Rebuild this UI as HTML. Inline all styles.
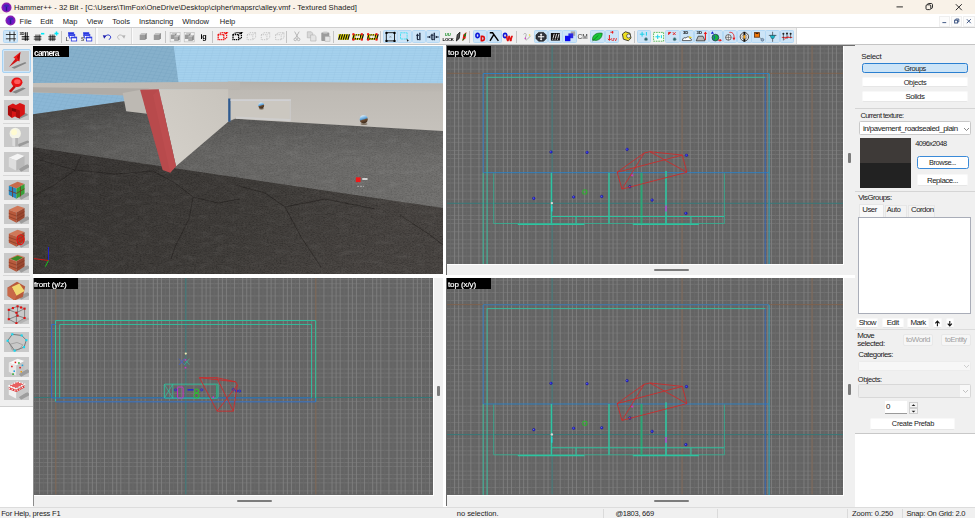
<!DOCTYPE html>
<html><head><meta charset="utf-8"><title>Hammer++</title>
<style>
*{box-sizing:border-box;margin:0;padding:0}
html,body{width:975px;height:518px;overflow:hidden;background:#fff}
body{position:relative;font-family:"Liberation Sans",sans-serif;font-size:7.5px;color:#1a1a1a;line-height:1}
.abs,.abs>*{position:absolute}
div,span,svg{position:absolute}
.t{white-space:nowrap;line-height:9px;height:9px}
#title{left:0;top:0;width:975px;height:14.400px;background:#f9f2e8}
#menu{left:0;top:14.400px;width:975px;height:12.600px;background:#fff}
#tbar{left:0;top:27px;width:975px;height:18.300px;background:linear-gradient(to right,#f0f0f0 796.400px,#fff 796.400px);border-top:1px solid #cfcfcf;border-bottom:1px solid #c4c4c4}
.hl{background:#cce4f7;border:1px solid #b5d9f5;border-radius:1.5px;height:13.5px;width:14.3px;top:1.9px}
.sep{top:3px;width:1px;height:12px;background:#c4c4c4}
#left{left:0;top:45px;width:33px;height:361px;background:#f0f0f0}
.lb{left:4.2px;width:24.8px;height:20px;background:#c9c9c9;overflow:hidden}
.lsep{left:3px;width:27px;height:1px;background:#d8d8d8}
.vp{background-color:#656565;overflow:hidden}
.lab{left:0;top:0;height:10.5px;background:#000;color:#fff;font-size:7.6px;line-height:10px;padding-left:1.2px;white-space:nowrap}
#right{left:855px;top:45px;width:120px;height:388.5px;background:#f0f0f0;border-bottom:1px solid #c8c8c8}
.btn{background:#fff;border:1px solid #f8f8f8;border-bottom-color:#e6e6e6;border-radius:2px;text-align:center;white-space:nowrap}
.hline{height:1px;background:#d5d5d5}
#status{left:0;top:507px;width:975px;height:11px;background:#f0f0f0;border-top:1px solid #dcdcdc}
.ssep{top:1px;width:1px;height:10px;background:#dadada}
.scr{background:#f0f0f0}
.thumb{background:#7c7c7c;border-radius:1px}
</style></head><body>

<div id="title">
<svg style="left:1px;top:2px" width="11" height="11" viewBox="0 0 11 11"><circle cx="5.5" cy="5.5" r="5" fill="#8a1fb0"/><circle cx="5.5" cy="5.5" r="3.6" fill="#6a18c8"/><rect x="4.8" y="4" width="1.4" height="5" fill="#2a1a8a"/><rect x="3.2" y="2.8" width="4.6" height="2" rx="0.8" fill="#3a2ab0"/></svg>
<span class="t" style="left:14px;top:2.7px;font-size:7.55px;letter-spacing:0.04px;color:#202020">Hammer++ - 32 Bit - [C:\Users\TimFox\OneDrive\Desktop\cipher\mapsrc\alley.vmf - Textured Shaded]</span>
<svg style="left:880px;top:0" width="95" height="15" viewBox="0 0 95 15" fill="none" stroke="#222" stroke-width="0.95"><path d="M16.5 6.9h6.400"/><rect x="46" y="4.800" width="4.800" height="4.800" rx="1.200"/><path d="M47.400 4.800c0-1 .5-1.300 1.300-1.300h2.400c1 0 1.400.5 1.400 1.400v2.300c0 .9-.5 1.300-1.400 1.300"/><path d="M75.800 4.200l6 6M81.800 4.200l-6 6"/></svg>
</div>
<div id="menu">
<svg style="left:5px;top:1.100px" width="11" height="11" viewBox="0 0 11 11"><circle cx="5.5" cy="5.5" r="5" fill="#8a1fb0"/><circle cx="5.5" cy="5.5" r="3.6" fill="#6a18c8"/><rect x="4.8" y="4" width="1.4" height="5" fill="#2a1a8a"/><rect x="3.2" y="2.8" width="4.6" height="2" rx="0.8" fill="#3a2ab0"/></svg>
<span class="t" style="left:19.6px;top:2.600px;font-size:7.55px">File</span>
<span class="t" style="left:40.2px;top:2.600px;font-size:7.55px">Edit</span>
<span class="t" style="left:62.8px;top:2.600px;font-size:7.55px">Map</span>
<span class="t" style="left:86.7px;top:2.600px;font-size:7.55px">View</span>
<span class="t" style="left:112.3px;top:2.600px;font-size:7.55px">Tools</span>
<span class="t" style="left:138.9px;top:2.600px;font-size:7.55px">Instancing</span>
<span class="t" style="left:182.2px;top:2.600px;font-size:7.55px">Window</span>
<span class="t" style="left:219.8px;top:2.600px;font-size:7.55px">Help</span>
<div style="left:938.5px;top:1.300px;width:11.400px;height:11.300px;background:#fcfcfc;border:1px solid #efefef"></div>
<div style="left:951px;top:1.300px;width:11.400px;height:11.300px;background:#fcfcfc;border:1px solid #efefef"></div>
<div style="left:963.3px;top:1.300px;width:11.400px;height:11.300px;background:#fcfcfc;border:1px solid #efefef"></div>
<svg style="left:939px;top:1px" width="36" height="12" viewBox="0 0 36 12" fill="none" stroke="#3c5482" stroke-width="0.95"><path d="M3.4 7.600h3.800"/><rect x="15.600" y="5.200" width="3" height="2.800"/><path d="M16.800 5.200v-1.200h3v2.800h-1.200"/><path d="M27.800 4.200l4 4M31.800 4.200l-4 4"/></svg>
</div>
<div id="tbar">
<div class="hl" style="left:3.45px"></div>
<div class="hl" style="left:383.25px"></div>
<div class="hl" style="left:397.25px"></div>
<div class="hl" style="left:411.65px"></div>
<div class="hl" style="left:426.05px"></div>
<div class="hl" style="left:473.15px"></div>
<div class="hl" style="left:487.25px"></div>
<div class="hl" style="left:533.95px"></div>
<div class="hl" style="left:548.35px"></div>
<div class="hl" style="left:562.35px"></div>
<div class="hl" style="left:590.35px"></div>
<div class="hl" style="left:604.75px"></div>
<div class="hl" style="left:637.05px"></div>
<div class="hl" style="left:665.45px"></div>
<div class="hl" style="left:679.85px"></div>
<div class="hl" style="left:694.25px"></div>
<div class="hl" style="left:708.55px"></div>
<div class="hl" style="left:722.85px"></div>
<div class="hl" style="left:737.25px"></div>
<div class="hl" style="left:751.45px"></div>
<div class="hl" style="left:765.45px"></div>
<div class="hl" style="left:779.85px"></div>
<div class="sep" style="left:60.8px"></div>
<div class="sep" style="left:164.8px"></div>
<div class="sep" style="left:211.5px"></div>
<div class="sep" style="left:286.4px"></div>
<div class="sep" style="left:333.1px"></div>
<div class="sep" style="left:380.1px"></div>
<div class="sep" style="left:469.4px"></div>
<div class="sep" style="left:516.1px"></div>
<div class="sep" style="left:634.2px"></div>
<div style="left:95.4px;top:0;width:1px;height:16.300px;background:#dadada"></div><div style="left:96.4px;top:0;width:1.200px;height:16.300px;background:#fbfbfb"></div>
<div style="left:130.5px;top:0;width:1px;height:16.300px;background:#dadada"></div><div style="left:131.5px;top:0;width:1.200px;height:16.300px;background:#fbfbfb"></div>
<div class="sep" style="left:796px;top:0;height:16.300px;background:#d8d8d8"></div>
<svg style="left:0;top:0;will-change:transform" width="800" height="17" viewBox="0 0 800 17">
<rect x="7.6" y="4.4" width="8.600" height="8.200" fill="#eaf8ff" opacity="0.700"/>
<path d="M5.900 6.500H15.900M5.900 10.800H15.900M9.850 3.600V13.400M14.100 3.600V13.400" stroke="#1a1a1a" stroke-width="0.850" fill="none"/>
<path d="M21.700 8.800H29.200M21.700 11.100H29.200M25.300 4.200V12.800M27.200 4.200V12.800" stroke="#000" stroke-width="1" fill="none"/><text x="19.500" y="7.300" font-size="4" font-weight="bold" fill="#000" font-family="Liberation Sans, sans-serif" letter-spacing="-0.2">3D</text>
<path d="M33.800 8.800H41.400M33.800 11.100H41.400M36 6.500V13.100M38 6.500V13.100M39.800 6.500V13.100" stroke="#000" stroke-width="0.800" fill="none"/><rect x="41" y="4.900" width="3.300" height="1.600" fill="#00e8f8"/>
<path d="M48.300 8.800H55.800M48.300 11.100H55.800M50.200 6.500V13.100M52.200 6.500V13.100M54 6.500V13.100" stroke="#000" stroke-width="0.800" fill="none"/><path d="M54.500 5.600h4M56.500 3.600v4" stroke="#00e8f8" stroke-width="1.500"/>
<rect x="68.5" y="4.700" width="5.300" height="3.400" fill="#fff" stroke="#2636e0" stroke-width="0.700"/><rect x="68.5" y="4.700" width="5.300" height="1.300" fill="#2636e0"/>
<rect x="69.39999999999999" y="6.600" width="5.400" height="3.400" fill="#fff" stroke="#2636e0" stroke-width="0.700"/><rect x="69.39999999999999" y="6.600" width="5.400" height="1.300" fill="#2636e0"/>
<rect x="71.3" y="9.100" width="5.400" height="3.900" fill="#fff" stroke="#2636e0" stroke-width="0.800"/><rect x="71.3" y="9.100" width="5.400" height="1.200" fill="#2636e0"/>
<text x="65.8" y="13.100" font-size="5" font-weight="bold" fill="#555" font-family="Liberation Sans, sans-serif">L</text>
<rect x="83.60000000000001" y="4.700" width="5.300" height="3.400" fill="#fff" stroke="#2636e0" stroke-width="0.700"/><rect x="83.60000000000001" y="4.700" width="5.300" height="1.300" fill="#2636e0"/>
<rect x="84.5" y="6.600" width="5.400" height="3.400" fill="#fff" stroke="#2636e0" stroke-width="0.700"/><rect x="84.5" y="6.600" width="5.400" height="1.300" fill="#2636e0"/>
<rect x="86.4" y="9.100" width="5.400" height="3.900" fill="#fff" stroke="#2636e0" stroke-width="0.800"/><rect x="86.4" y="9.100" width="5.400" height="1.200" fill="#2636e0"/>
<text x="80.9" y="13.100" font-size="5" font-weight="bold" fill="#555" font-family="Liberation Sans, sans-serif">S</text>
<path d="M105.200 8.600c1.400-2.200 4.800-2.200 5.400.2.300 1.400-.6 2.300-1.800 2.500" fill="none" stroke="#1a2acc" stroke-width="1"/><path d="M102.800 7.300l3.600.3-2.200 3.200z" fill="#1a1aaa"/>
<path d="M123.100 8.600c-1.400-2.200-4.800-2.200-5.400.2-.3 1.400.6 2.300 1.800 2.500" fill="none" stroke="#b4b4b4" stroke-width="0.9"/><path d="M125.500 7.300l-3.600.3 2.200 3.200z" fill="#b4b4b4"/>
<g transform="translate(0 0.700)">
<path d="M139.7 6.2l1.600-1.800h6l-1.600 1.800z" fill="#c4c4c4"/><rect x="139.7" y="6.2" width="5.4" height="5.1" fill="#9a9a9a"/><path d="M145.1 6.2l1.600-1.800v5.1l-1.600 1.800z" fill="#7d7d7d"/>
<path d="M153.8 6.2l1.600-1.800h6l-1.600 1.800z" fill="#c4c4c4"/><rect x="153.8" y="6.2" width="5.4" height="5.1" fill="#9a9a9a"/><path d="M159.20000000000002 6.2l1.600-1.800v5.1l-1.600 1.800z" fill="#7d7d7d"/>
<rect x="170.1" y="3.600" width="10" height="9.600" fill="none" stroke="#b8b8b8" stroke-width="0.600"/>
<path d="M170.85 6.2l1.600-1.800h4.5l-1.600 1.800z" fill="#c4c4c4"/><rect x="170.85" y="6.2" width="3.9" height="4.1" fill="#9a9a9a"/><path d="M174.75 6.2l1.600-1.800v4.1l-1.600 1.800z" fill="#7d7d7d"/>
<path d="M174.15 8.2l1.600-1.800h4.5l-1.600 1.800z" fill="#c4c4c4"/><rect x="174.15" y="8.2" width="3.9" height="4.1" fill="#a8a8a8"/><path d="M178.05 8.2l1.600-1.800v4.1l-1.600 1.800z" fill="#7d7d7d"/>
<rect x="184.2" y="3.600" width="10" height="9.600" fill="none" stroke="#b8b8b8" stroke-width="0.600"/>
<path d="M184.95 6.2l1.600-1.800h4.5l-1.600 1.800z" fill="#c4c4c4"/><rect x="184.95" y="6.2" width="3.9" height="4.1" fill="#9a9a9a"/><path d="M188.85 6.2l1.600-1.800v4.1l-1.600 1.800z" fill="#7d7d7d"/>
<path d="M188.25 8.2l1.600-1.800h4.5l-1.600 1.800z" fill="#c4c4c4"/><rect x="188.25" y="8.2" width="3.9" height="4.1" fill="#a8a8a8"/><path d="M192.15 8.2l1.600-1.800v4.1l-1.600 1.800z" fill="#7d7d7d"/>
</g>
<text x="200.600" y="10.500" font-size="7.200" font-weight="bold" fill="#000" font-family="Liberation Sans, sans-serif" letter-spacing="-0.3">ig</text>
<path d="M218.2 6.700h5.600v5h-5.600zM218.2 6.700l2.800-2h5.600l-2.800 2M226.6 4.700v5l-2.800 2" fill="none" stroke="#f01010" stroke-width="1.25" stroke-dasharray="1.300 0.700"/>
<path d="M233.0 6.700h5.600v5h-5.600zM233.0 6.700l2.800-2h5.600l-2.800 2M241.4 4.700v5l-2.800 2" fill="none" stroke="#000" stroke-width="1.25" stroke-dasharray="1.300 0.700"/>
<path d="M247.2 6.700h5.600v5h-5.600zM247.2 6.700l2.800-2h5.600l-2.800 2M255.6 4.700v5l-2.800 2" fill="none" stroke="#b4b4b4" stroke-width="0.8" stroke-dasharray="0.9 0.9"/>
<path d="M261.3 6.700h5.600v5h-5.600zM261.3 6.700l2.800-2h5.600l-2.800 2M269.7 4.700v5l-2.800 2" fill="none" stroke="#b4b4b4" stroke-width="0.8" stroke-dasharray="0.9 0.9"/>
<path d="M275.6 6.700h5.600v5h-5.600zM275.6 6.700l2.800-2h5.600l-2.800 2M284.0 4.700v5l-2.800 2" fill="none" stroke="#b4b4b4" stroke-width="0.8" stroke-dasharray="0.9 0.9"/>
<path d="M294.600 3.600l3.600 6.400M299.200 3.600l-3.600 6.400" stroke="#a8a8a8" stroke-width="0.800" fill="none"/><circle cx="295.300" cy="11.400" r="1.300" fill="none" stroke="#a8a8a8" stroke-width="0.800"/><circle cx="298.600" cy="11.400" r="1.300" fill="none" stroke="#a8a8a8" stroke-width="0.800"/>
<path d="M307.300 3.800h4l1.400 1.400v4.600h-5.400z" fill="#d8d8d8" stroke="#b0b0b0" stroke-width="0.600"/><path d="M310.600 7h4l1.400 1.400v4.600h-5.400z" fill="#e4e4e4" stroke="#b0b0b0" stroke-width="0.600"/>
<rect x="321.300" y="4.600" width="8" height="8.400" rx="0.800" fill="#9c9c9c"/><rect x="323.300" y="3.600" width="4" height="2" fill="#c8c8c8"/><rect x="325" y="8.400" width="5" height="4.800" fill="#e6e6e6" stroke="#aaa" stroke-width="0.500"/>
<rect x="338.40000000000003" y="6.200" width="10.400" height="5.600" fill="#f5ea00"/><path d="M339.6 6.200h1.300l-1.600 5.600h-1.300z" fill="#111"/><path d="M341.90000000000003 6.200h1.300l-1.600 5.600h-1.300z" fill="#111"/><path d="M344.20000000000005 6.200h1.300l-1.600 5.600h-1.300z" fill="#111"/><path d="M346.5 6.200h1.300l-1.600 5.600h-1.300z" fill="#111"/><path d="M348.8 6.200h1.300l-1.600 5.600h-1.300z" fill="#111"/>
<rect x="352.40000000000003" y="6.200" width="10.400" height="5.600" fill="#f5ea00"/><path d="M353.6 6.200h1.300l-1.600 5.600h-1.300z" fill="#111"/><path d="M355.90000000000003 6.200h1.300l-1.600 5.600h-1.300z" fill="#111"/><path d="M358.20000000000005 6.200h1.300l-1.600 5.600h-1.300z" fill="#111"/><path d="M360.5 6.200h1.300l-1.600 5.600h-1.300z" fill="#111"/><path d="M362.8 6.200h1.300l-1.600 5.600h-1.300z" fill="#111"/><rect x="355.20000000000005" y="7.600" width="4.800" height="2.400" fill="#fff" opacity="0.85"/><rect x="352.40000000000003" y="5.2" width="2" height="2" fill="#ee1111"/><rect x="360.8" y="5.2" width="2" height="2" fill="#ee1111"/><rect x="352.40000000000003" y="10.6" width="2" height="2" fill="#ee1111"/><rect x="360.8" y="10.6" width="2" height="2" fill="#ee1111"/>
<rect x="367.1" y="6.200" width="10.400" height="5.600" fill="#f5ea00"/><path d="M368.3 6.200h1.300l-1.600 5.600h-1.300z" fill="#111"/><path d="M370.6 6.200h1.300l-1.600 5.600h-1.300z" fill="#111"/><path d="M372.90000000000003 6.200h1.300l-1.600 5.600h-1.300z" fill="#111"/><path d="M375.2 6.200h1.300l-1.600 5.600h-1.300z" fill="#111"/><path d="M377.5 6.200h1.300l-1.600 5.600h-1.300z" fill="#111"/><rect x="369.90000000000003" y="7.600" width="4.800" height="2.400" fill="#fff" opacity="0.85"/><rect x="367.1" y="5.2" width="2" height="2" fill="#ee1111"/><rect x="375.5" y="5.2" width="2" height="2" fill="#ee1111"/><rect x="367.1" y="10.6" width="2" height="2" fill="#ee1111"/><rect x="375.5" y="10.6" width="2" height="2" fill="#ee1111"/>
<rect x="386.300" y="4.700" width="8.200" height="8.200" fill="none" stroke="#111" stroke-width="0.900"/>
<circle cx="386.5" cy="4.9" r="1.200" fill="#000"/>
<circle cx="394.5" cy="4.9" r="1.200" fill="#000"/>
<circle cx="386.5" cy="12.9" r="1.200" fill="#000"/>
<circle cx="394.5" cy="12.9" r="1.200" fill="#000"/>
<path d="M389.400 7.800l2 2M391.400 7.800l-2 2" stroke="#777" stroke-width="0.500"/>
<rect x="400.500" y="4.800" width="6.600" height="6.200" fill="none" stroke="#40e0f4" stroke-width="0.900" stroke-dasharray="2.200 0.600"/><path d="M406.600 10.400l2.400 2.600-1.200.1-.6 1z" fill="#222"/>
<text x="416.2" y="12.300" font-size="9.500" fill="#0c1830" stroke="#0c1830" stroke-width="0.350" font-family="Liberation Sans, sans-serif" letter-spacing="-0.2">tl</text>
<text x="430.800" y="12.300" font-size="9.500" fill="#0c1830" stroke="#0c1830" stroke-width="0.350" font-family="Liberation Sans, sans-serif" letter-spacing="-0.2">tl</text><path d="M427.200 9h3M435.800 9h3" stroke="#0c1830" stroke-width="0.900"/><path d="M428.600 9l1.700-1.500v3zM437.400 9l-1.700-1.500v3z" fill="#0c1830"/>
<text x="444.8" y="7.800" font-size="4.200" font-weight="bold" fill="#128a22" font-family="Liberation Sans, sans-serif">UU</text><text x="442.6" y="12.800" font-size="4.300" font-weight="bold" fill="#000" font-family="Liberation Sans, sans-serif" letter-spacing="-0.3">LOCK</text>
<path d="M456.400 13l.8-6.200 2.800-2.600-.8 6.200z" fill="#555" stroke="#111" stroke-width="0.800"/><path d="M462.400 13l.8-6.200 3.200-2.800-.8 6.200z" fill="#f01010"/><path d="M464 7l2.200-2.400-.4 3.200-1.800 1.600zM462.700 11.200l1.600-1.400-.3 2-1.500 1.200z" fill="#0a8a1a"/>
<text transform="translate(475.300 10) scale(0.75 1)" font-size="8" font-weight="bold" fill="#0a14d8" stroke="#0a14d8" stroke-width="0.900" font-family="Liberation Sans, sans-serif">O</text><text transform="translate(480.400 13) scale(0.8 1)" font-size="8" font-weight="bold" fill="#e00808" stroke="#e00808" stroke-width="0.800" font-family="Liberation Sans, sans-serif">D</text>
<path d="M489.800 4.800h2.800l5.800 8M493.600 6.800l-3.600 6" stroke="#000" stroke-width="1.400" fill="none"/>
<text transform="translate(502.800 10) scale(0.75 1)" font-size="8" font-weight="bold" fill="#0a14d8" stroke="#0a14d8" stroke-width="0.900" font-family="Liberation Sans, sans-serif">O</text><text transform="translate(506 13) scale(0.85 1)" font-size="8" font-weight="bold" fill="#e00808" stroke="#e00808" stroke-width="0.700" font-family="Liberation Sans, sans-serif">W</text>
<path d="M523.600 6.400c1-1.600 3-1 2.600.6l-1 3.400c-.4 1.400 1.200 2 2 1l3.400-3.600" stroke="#a8a8a8" stroke-width="0.900" fill="none"/><circle cx="529.600" cy="7" r="0.800" fill="#e8e020"/><circle cx="525.400" cy="10.400" r="0.800" fill="#d840c8"/>
<path d="M538.600 4.400h5l2.600 2.600v3.600l-2.600 2.600h-5l-2.600-2.600v-3.600z" fill="#30343c" stroke="#111" stroke-width="0.600"/><path d="M538 8.800h6.200M541.100 6v5.600" stroke="#fff" stroke-width="1.100"/><path d="M541.100 5.200l1.300 1.500h-2.600zM541.100 12.400l1.300-1.500h-2.600z" fill="#fff"/>
<rect x="550.900" y="5" width="9" height="7.600" fill="#111"/><path d="M552.600 11.800l1.600-6M555 11.800l1.600-6M557.400 11.800l1.600-6" stroke="#f4f4f4" stroke-width="0.900"/><path d="M551.600 10.600h7.600" stroke="#111" stroke-width="0.500"/>
<rect x="570.800" y="3.400" width="4.400" height="4.400" fill="#a8a8a8"/><rect x="568.400" y="5.400" width="4.800" height="4.800" fill="#2a2ae0"/><rect x="565" y="7.800" width="5.400" height="5.400" fill="#0a0af0"/>
<text x="577.6" y="11.400" font-size="6.600" fill="#333" font-family="Liberation Sans, sans-serif">CM</text>
<path d="M592.600 12.200c-.8-4.200 3-8 9.600-7 .2 4.600-3.600 8-8 7z" fill="#18c838" stroke="#0a5a18" stroke-width="0.600"/><path d="M592.400 13l6-5.600" stroke="#0a5a18" stroke-width="0.600"/>
<path d="M610.400 4.200h3M612.600 3v2.600M609.400 7v5M608 10.800l1.400 1.600 1.400-1.600" stroke="#e81818" stroke-width="1" fill="none"/><text x="611.2" y="13" font-size="4.200" font-weight="bold" fill="#e81818" font-family="Liberation Sans, sans-serif">UV</text>
<path d="M622.400 6l3-2.200 4.600 1.400 1 4.800-2.600 2.800-5-1.600z" fill="#f0e020" stroke="#222" stroke-width="0.800"/><circle cx="628.600" cy="8" r="2" fill="#eee" stroke="#222" stroke-width="0.600"/>
<path d="M639.800 6.200h4.600M642.100 3.800v4.800M646.400 4v3.600" stroke="#18d0e8" stroke-width="1"/><circle cx="646" cy="11.200" r="1.600" fill="#2a6a6a" stroke="#9ab" stroke-width="0.500"/>
<rect x="653.600" y="4.400" width="10" height="8.800" fill="#f4fff4" stroke="#3aa83a" stroke-width="0.800" stroke-dasharray="1.600 0.900"/><path d="M655.400 8.800h4.600M657.700 6.600v4.400M661.400 7.200v3" stroke="#18d0e8" stroke-width="1"/>
<path d="M668.600 4.400h2.200l-2.200 2.200zM672.800 4.200l2.800 2.800M675.600 4.200l-2.800 2.800" stroke="#e81818" stroke-width="0.900" fill="#e81818"/><circle cx="674.600" cy="11.200" r="1.600" fill="#2a6a6a" stroke="#9ab" stroke-width="0.500"/>
<path d="M682.400 12.600c0-2.600 2-3.400 3.600-2.600 1-1.800 4-1.400 4.200.8 1.600 0 2 1.800.6 1.800z" fill="#fff" stroke="#222" stroke-width="0.700"/><path d="M689.200 8l3 1.600-3 1z" fill="#e8d020"/><text x="683" y="6.400" font-size="4.200" font-weight="bold" fill="#000" font-family="Liberation Sans, sans-serif">3D</text>
<path d="M696.200 12.800l2-4.600h4.800l2 4.600z" fill="#bbb" stroke="#222" stroke-width="0.700"/><text x="696.600" y="6.400" font-size="4.200" font-weight="bold" fill="#000" font-family="Liberation Sans, sans-serif">3D</text><path d="M705.400 12v-6.400" stroke="#e81818" stroke-width="1.100"/><path d="M705.400 3.400l1.700 2.600h-3.400z" fill="#e81818"/>
<circle cx="715.400" cy="9.600" r="3.400" fill="#18b040" stroke="#115" stroke-width="0.600"/><path d="M713 7.200l1.800 1.800-1 2.600" stroke="#1a3ad0" stroke-width="0.900" fill="none"/><path d="M712.400 3.200l1.600 2.600h-3.200z" fill="#1320d0"/><path d="M718.200 12.200h2.200" stroke="#e81818" stroke-width="1"/><path d="M722 12.200l-2.400-1.500v3z" fill="#e81818"/>
<circle cx="728.400" cy="9.400" r="2.800" fill="#f4f4f4" stroke="#333" stroke-width="0.700"/><path d="M725.600 9.400h5.600M728.400 6.600v5.600" stroke="#333" stroke-width="0.500"/><path d="M729.400 4.400c3-.6 5 1.800 4.600 5.600" stroke="#e81818" stroke-width="0.900" fill="none"/><path d="M734 12.600l-1.600-2.800h3z" fill="#e81818"/>
<circle cx="744.400" cy="8.800" r="4.200" fill="#f0f0f0" stroke="#333" stroke-width="0.900"/><circle cx="744.400" cy="8.800" r="2.500" fill="none" stroke="#555" stroke-width="0.500"/><path d="M744.400 3.800v10" stroke="#111" stroke-width="1.800"/><path d="M744.400 6.400l1.200 2.400-1.200 2.400-1.200-2.400z" fill="#f8a010"/>
<rect x="754.600" y="4.600" width="4.800" height="4.600" fill="#f07808" stroke="#5a2a08" stroke-width="0.800"/><rect x="755.600" y="5" width="2.800" height="1" fill="#402008"/><path d="M759.800 9.400l2 2" stroke="#444" stroke-width="0.600"/><circle cx="762.400" cy="11.800" r="1.400" fill="#9ac" stroke="#356" stroke-width="0.500"/>
<path d="M772.600 3.800v10M768.800 7.400h7.600" stroke="#222" stroke-width="0.600"/><path d="M770 7.400h5.200l-1.400 3h-2.400z" fill="#18b8c8" stroke="#134" stroke-width="0.400"/>
<path d="M781.800 9.400h10.400" stroke="#e81818" stroke-width="0.900"/><path d="M783.400 5.400v7M787 5v6M790.600 5.400v5" stroke="#222" stroke-width="0.600"/><circle cx="783.400" cy="5.800" r="1" fill="#222"/><circle cx="787" cy="5.400" r="1" fill="#222"/><circle cx="790.600" cy="5.800" r="1" fill="#222"/><path d="M784 11.400l4.600-3.200" stroke="#e81818" stroke-width="0.700"/>
</svg>
</div>
<div id="left">
<div style="left:1.9px;top:4px;width:29px;height:24.200px;background:#cfe6f8;border:1px solid #a8d2f2;border-radius:2px"></div>
<div class="lb" style="top:6.4px"><svg style="left:0;top:0" width="24.8" height="20" viewBox="0 0 25 20"><g transform="translate(12.5 10.500) scale(1.0) translate(-12.5 -10.500)"><path d="M7.500 16.500l14-5.500 1 1.200-12 5.500z" fill="#858585"/><path d="M5 16l7-9 2.600 2.200z" fill="#d01414"/><path d="M9.500 6.500l7-5.500-1.200 9.500z" fill="#f01c1c"/><path d="M13 6l3.500-5-1.200 9.500z" fill="#b80c0c"/></g></svg></div>
<div class="lb" style="top:30.7px"><svg style="left:0;top:0" width="24.8" height="20" viewBox="0 0 25 20"><g transform="translate(12.5 10.500) scale(1.0) translate(-12.5 -10.500)"><path d="M8 16l11-4.500 3 1-10 5z" fill="#858585"/><ellipse cx="13" cy="6.300" rx="5.600" ry="4.800" fill="#e81414"/><ellipse cx="13.500" cy="5.600" rx="3.300" ry="2.500" fill="#ff5a5a"/><path d="M10 9.500l-5 5.500 2 1.600 5-5.500z" fill="#c00c0c"/></g></svg></div>
<div class="lb" style="top:55.0px"><svg style="left:0;top:0" width="24.8" height="20" viewBox="0 0 25 20"><g transform="translate(12.5 10.500) scale(1.0) translate(-12.5 -10.500)"><path d="M13 17l9-4 2.500 2-9 4z" fill="#8e8e8e"/><path d="M4 6l5-2.500 3 1.500 4-2 5 2v9l-6 4-4-1.500-3 1.500-4-3z" fill="#d81414"/><path d="M4 6l4 2v9.500l-4-3zM12 9l4 1.500v8l-4-1.500z" fill="#a80c0c"/><path d="M8 8l4 1v3l-4-1z" fill="#7a0808"/></g></svg></div>
<div class="lb" style="top:82.4px"><svg style="left:0;top:0" width="24.8" height="20" viewBox="0 0 25 20"><g transform="translate(12.5 10.500) scale(1.18) translate(-12.5 -10.500)"><path d="M13 16.500l9-3.500 2 1.500-9 4z" fill="#9a9a9a"/><circle cx="11.500" cy="7" r="4.800" fill="#f4f4e8"/><circle cx="10.500" cy="6" r="2.500" fill="#fffbd0"/><path d="M9 11h5v6.500l-2.500 1-2.500-1z" fill="#dcdcdc"/><path d="M11.500 11h2.500v6.500l-2.500 1z" fill="#b4b4b4"/></g></svg></div>
<div class="lb" style="top:106.7px"><svg style="left:0;top:0" width="24.8" height="20" viewBox="0 0 25 20"><g transform="translate(12.5 10.500) scale(1.18) translate(-12.5 -10.500)"><path d="M14 15.500l8-3.500 2.500 2-8 4.500z" fill="#9d9d9d"/><path d="M6 6.500l7.500-3.500 6 2-7 3.800z" fill="#f4f4f4"/><path d="M6 6.500l6.500 2.300v8.700l-6.500-3.300z" fill="#dedede"/><path d="M12.500 8.800l7-3.800v8l-7 4.500z" fill="#b8b8b8"/></g></svg></div>
<div class="lb" style="top:134.5px"><svg style="left:0;top:0" width="24.8" height="20" viewBox="0 0 25 20"><g transform="translate(12.5 10.500) scale(1.18) translate(-12.5 -10.500)"><path d="M14 15.500l8-3.500 2.500 2-8 4.500z" fill="#9d9d9d"/><path d="M6 6.500l7.500-3.500 6 2-7 3.800z" fill="#c86a4a"/><path d="M6 6.500l6.500 2.300v8.700l-6.500-3.300z" fill="#2a8ac0"/><path d="M12.500 8.800l7-3.800v8l-7 4.500z" fill="#38a038"/><path d="M6 10.500l6.500 2.500M9.200 7.600v8.600M12.500 13l7-4M16 7v8.600" stroke="#7a2a18" stroke-width="0.600" fill="none"/></g></svg></div>
<div class="lb" style="top:159.0px"><svg style="left:0;top:0" width="24.8" height="20" viewBox="0 0 25 20"><g transform="translate(12.5 10.500) scale(1.18) translate(-12.5 -10.500)"><path d="M14 15.500l8-3.500 2.500 2-8 4.500z" fill="#9d9d9d"/><path d="M6 6.500l7.500-3.500 6 2-7 3.800z" fill="#d07858"/><path d="M6 6.500l6.500 2.300v8.700l-6.500-3.300z" fill="#b85a3c"/><path d="M12.500 8.800l7-3.800v8l-7 4.500z" fill="#9a4830"/><path d="M6 9.500l6.500 2.300 7-3.800M6 12.300l6.500 2.500 7-4" stroke="#7a3420" stroke-width="0.500" fill="none"/></g></svg></div>
<div class="lb" style="top:183.4px"><svg style="left:0;top:0" width="24.8" height="20" viewBox="0 0 25 20"><g transform="translate(12.5 10.500) scale(1.18) translate(-12.5 -10.500)"><path d="M14 15.500l8-3.500 2.500 2-8 4.500z" fill="#9d9d9d"/><path d="M6 6.500l7.500-3.500 6 2-7 3.800z" fill="#d07858"/><path d="M6 6.500l6.500 2.300v8.700l-6.500-3.300z" fill="#b85a3c"/><path d="M12.500 8.800l7-3.800v8l-7 4.500z" fill="#9a4830"/><path d="M6 9.500l6.500 2.300 7-3.800M6 12.300l6.500 2.500 7-4" stroke="#7a3420" stroke-width="0.500" fill="none"/><ellipse cx="16" cy="11.500" rx="3" ry="4.200" fill="none" stroke="#f01010" stroke-width="1"/><ellipse cx="16" cy="11.500" rx="1.200" ry="1.800" fill="none" stroke="#f01010" stroke-width="0.800"/></g></svg></div>
<div class="lb" style="top:207.7px"><svg style="left:0;top:0" width="24.8" height="20" viewBox="0 0 25 20"><g transform="translate(12.5 10.500) scale(1.18) translate(-12.5 -10.500)"><path d="M14 15.500l8-3.500 2.500 2-8 4.500z" fill="#9d9d9d"/><path d="M6 6.500l7.500-3.500 6 2-7 3.800z" fill="#d07858"/><path d="M6 6.500l6.500 2.300v8.700l-6.500-3.300z" fill="#b85a3c"/><path d="M12.500 8.800l7-3.800v8l-7 4.500z" fill="#9a4830"/><path d="M6 9.500l6.500 2.300 7-3.800M6 12.300l6.500 2.500 7-4" stroke="#7a3420" stroke-width="0.500" fill="none"/><path d="M7.500 6.500l6-2.700 4.500 1.500-5.600 3z" fill="#3a8a28"/></g></svg></div>
<div class="lb" style="top:235.3px"><svg style="left:0;top:0" width="24.8" height="20" viewBox="0 0 25 20"><g transform="translate(12.5 10.500) scale(1.18) translate(-12.5 -10.500)"><path d="M14 15.500l8-3.500 2.500 2-8 4.500z" fill="#9d9d9d"/><path d="M5 8l8-5 7 4-2 9-7 3-6-4z" fill="#b85a3c"/><path d="M8.500 7.500l6.500-3 4.500 6.500-7 4z" fill="#f0d870"/><path d="M5 8l3.500-.5 4 7.500-1.500 4-6-4z" fill="#c86848"/></g></svg></div>
<div class="lb" style="top:258.8px"><svg style="left:0;top:0" width="24.8" height="20" viewBox="0 0 25 20"><g transform="translate(12.5 10.500) scale(1.18) translate(-12.5 -10.500)"><path d="M6 6.500l7.500-3 6 2-7 3.500zM6 6.500v8l6.500 3.500v-9M19.500 5.500v8l-7 4.500M6 14.500l7.500-3 6 2M13.500 3.500v8" fill="none" stroke="#555" stroke-width="0.500"/><path d="M14 16l8-3 2 1.500-8 4z" fill="#aaa" opacity="0.700"/><rect x="5.1" y="5.6" width="1.800" height="1.800" fill="#e01010"/><rect x="12.6" y="2.6" width="1.800" height="1.800" fill="#e01010"/><rect x="18.6" y="4.6" width="1.800" height="1.800" fill="#e01010"/><rect x="11.6" y="8.1" width="1.800" height="1.800" fill="#e01010"/><rect x="5.1" y="13.6" width="1.800" height="1.800" fill="#e01010"/><rect x="11.6" y="17.1" width="1.800" height="1.800" fill="#e01010"/><rect x="18.6" y="12.6" width="1.800" height="1.800" fill="#e01010"/><rect x="12.6" y="10.6" width="1.800" height="1.800" fill="#e01010"/><rect x="8.6" y="4.1" width="1.800" height="1.800" fill="#e01010"/><rect x="15.6" y="3.6" width="1.800" height="1.800" fill="#e01010"/></g></svg></div>
<div class="lb" style="top:286.6px"><svg style="left:0;top:0" width="24.8" height="20" viewBox="0 0 25 20"><g transform="translate(12.5 10.500) scale(1.18) translate(-12.5 -10.500)"><path d="M5 9l4-5.500 8 1 4 4-2 6-8 3z" fill="none" stroke="#555" stroke-width="0.600"/><path d="M7 12l6-1.500 5 2-3 4-6 .5z" fill="none" stroke="#888" stroke-width="0.500"/><rect x="4.1" y="8.1" width="1.800" height="1.800" fill="#18d8f0"/><rect x="8.1" y="2.6" width="1.800" height="1.800" fill="#18d8f0"/><rect x="16.1" y="3.6" width="1.800" height="1.800" fill="#18d8f0"/><rect x="20.1" y="7.6" width="1.800" height="1.800" fill="#18d8f0"/><rect x="18.1" y="13.6" width="1.800" height="1.800" fill="#18d8f0"/><rect x="10.1" y="16.6" width="1.800" height="1.800" fill="#18d8f0"/></g></svg></div>
<div class="lb" style="top:311.5px"><svg style="left:0;top:0" width="24.8" height="20" viewBox="0 0 25 20"><g transform="translate(12.5 10.500) scale(1.18) translate(-12.5 -10.500)"><path d="M14 15.500l8-3.500 2.500 2-8 4.500z" fill="#9d9d9d"/><path d="M6 6.500l7.500-3.500 6 2-7 3.800z" fill="#f8f8f8"/><path d="M6 6.500l6.500 2.300v8.700l-6.500-3.300z" fill="#e8e8e8"/><path d="M12.500 8.800l7-3.800v8l-7 4.500z" fill="#c4c4c4"/><rect x="8" y="9" width="1.300" height="1.300" fill="#e01010"/><rect x="10" y="13" width="1.300" height="1.300" fill="#18a0e0"/><rect x="9" y="15.5" width="1.300" height="1.300" fill="#18a018"/><rect x="15" y="10" width="1.300" height="1.300" fill="#e01010"/><rect x="17" y="8" width="1.300" height="1.300" fill="#18a0e0"/><rect x="16" y="13.5" width="1.300" height="1.300" fill="#e8a010"/><rect x="11" y="5.5" width="1.300" height="1.300" fill="#e01010"/><rect x="14" y="6" width="1.300" height="1.300" fill="#18a018"/></g></svg></div>
<div class="lb" style="top:335.3px"><svg style="left:0;top:0" width="24.8" height="20" viewBox="0 0 25 20"><g transform="translate(12.5 10.500) scale(1.18) translate(-12.5 -10.500)"><path d="M14 15.500l8-3.500 2.500 2-8 4.500z" fill="#9d9d9d"/><path d="M6 6.500l7.500-3.500 6 2-7 3.800z" fill="#e86060"/><path d="M6 6.500l6.500 2.300v8.700l-6.500-3.300z" fill="#f0f0f0"/><path d="M12.500 8.800l7-3.800v8l-7 4.500z" fill="#c8c8c8"/><path d="M6 6.500l7.500-3.500 6 2-7 3.800z" fill="none" stroke="#fff" stroke-width="0.900" stroke-dasharray="1.200 1.200"/><path d="M6 7.500l6.500 2.300 7-3.800v2l-7 3.800-6.500-2.300z" fill="#e03838"/><path d="M6 8.500l6.500 2.300 7-3.800" fill="none" stroke="#fff" stroke-width="0.800" stroke-dasharray="1.200 1.200"/></g></svg></div>
<div class="lsep" style="top:78.0px"></div>
<div class="lsep" style="top:129.5px"></div>
<div class="lsep" style="top:230.2px"></div>
<div class="lsep" style="top:282.1px"></div>
</div>
<div style="left:0;top:406px;width:33px;height:1px;background:#d0d0d0"></div>
<div class="vp" style="left:33px;top:46px;width:410px;height:228.200px;background:#3a3735"></div>
<svg style="left:33px;top:46px" width="410" height="228" viewBox="33 46 410 228"><defs>
<pattern id="skyL" width="5" height="3.500" patternUnits="userSpaceOnUse" patternTransform="rotate(8) skewX(-18)"><path d="M0 0H5M0 0V3.500" stroke="#6f9cba" stroke-width="0.500" fill="none"/></pattern>
<pattern id="skyR" width="7.500" height="2.400" patternUnits="userSpaceOnUse" patternTransform="skewX(-14)"><path d="M0 0H7.500" stroke="#8ebcdd" stroke-width="0.600" fill="none"/><path d="M0 0V2.400" stroke="#93c0de" stroke-width="0.500" fill="none"/></pattern>
<linearGradient id="flr" x1="0" y1="0" x2="1" y2="0"><stop offset="0" stop-color="#5d5c5a"/><stop offset="0.450" stop-color="#686765"/><stop offset="1" stop-color="#737270"/></linearGradient>
<linearGradient id="asp" x1="0" y1="0" x2="1" y2="0.300"><stop offset="0" stop-color="#3a3735"/><stop offset="0.600" stop-color="#413e3b"/><stop offset="1" stop-color="#4a4643"/></linearGradient>
<filter id="nz" x="0" y="0" width="100%" height="100%"><feTurbulence type="fractalNoise" baseFrequency="0.55 0.9" numOctaves="3" seed="7" result="t"/><feColorMatrix type="matrix" values="0 0 0 0 0  0 0 0 0 0  0 0 0 0 0  0.6 0.6 0 0 -0.5"/></filter>
<filter id="nz2" x="0" y="0" width="100%" height="100%"><feTurbulence type="fractalNoise" baseFrequency="0.08 0.2" numOctaves="3" seed="11"/><feColorMatrix type="matrix" values="0 0 0 0 1  0 0 0 0 1  0 0 0 0 1  0.5 0.5 0 0 -0.44"/></filter>
<clipPath id="cpA"><path d="M33 147.200L443 208V274H33z"/></clipPath>
<clipPath id="cpF"><path d="M33 114.300L124 101.300L228 121.700L235 118.800L443 131V208L33 147.200z"/></clipPath>
<linearGradient id="bm" gradientUnits="userSpaceOnUse" x1="33" y1="0" x2="240" y2="0"><stop offset="0" stop-color="#c4c0ba"/><stop offset="0.600" stop-color="#bebab4"/><stop offset="1" stop-color="#bab6b0"/></linearGradient>
<linearGradient id="bw" x1="0" y1="0" x2="0" y2="1"><stop offset="0" stop-color="#bcb8b2"/><stop offset="1" stop-color="#c6c2bc"/></linearGradient>
<linearGradient id="bwt" x1="0" y1="0" x2="0" y2="1"><stop offset="0" stop-color="#b5b1ab"/><stop offset="1" stop-color="#bcb8b2"/></linearGradient>
<linearGradient id="fsh2" gradientUnits="userSpaceOnUse" x1="300" y1="122" x2="297.500" y2="156"><stop offset="0" stop-color="#000" stop-opacity="0.140"/><stop offset="1" stop-color="#000" stop-opacity="0"/></linearGradient>
<linearGradient id="fsh" gradientUnits="userSpaceOnUse" x1="80" y1="107" x2="86" y2="150"><stop offset="0" stop-color="#000" stop-opacity="0.200"/><stop offset="1" stop-color="#000" stop-opacity="0"/></linearGradient>
<linearGradient id="lw" x1="1" y1="0" x2="0" y2="1"><stop offset="0" stop-color="#c8c4bd"/><stop offset="1" stop-color="#d5d1ca"/></linearGradient>
<linearGradient id="sph" x1="0.300" y1="0" x2="0.600" y2="1"><stop offset="0" stop-color="#dff2ff"/><stop offset="0.450" stop-color="#5aa0d8"/><stop offset="0.600" stop-color="#6a4a30"/><stop offset="1" stop-color="#3a2a1c"/></linearGradient>
</defs><rect x="33" y="46" width="410" height="228" fill="#a5d1ed"/><rect x="33" y="46" width="410" height="80" fill="url(#skyR)"/><path d="M33 46H173.700L178.500 83H33z" fill="#86b0cb"/><path d="M33 46H173.700L178.500 83H33z" fill="url(#skyL)"/><path d="M33 90H124V102L33 115z" fill="#8bb7d6"/><path d="M33 90H124V102L33 115z" fill="url(#skyL)" opacity="0.600"/><path d="M33 114.300L124 101.300L228 110L235 110L443 125V212L33 151z" fill="url(#flr)"/><path d="M225 110L443 125V212L176 172z" fill="url(#fsh2)"/><path d="M33 114.300L124 101.300L228 121.700L176 166L162 167L33 147.200z" fill="url(#fsh)"/><path d="M33 147.200L443 208V274H33z" fill="url(#asp)"/><path d="M33 196l20-10 22-16 6-14M75 170l40 4 38-3 22 12 18 14-4 22-14 28-4 12M193 197l25 6 22-4M40 160l35 10M235 185l30 8 20 14 16 30 20 30M285 207l40-8 50 10M400 215l30 20 13 10" stroke="#221e1c" stroke-width="0.900" fill="none" opacity="0.600"/><g clip-path="url(#cpA)"><rect x="33" y="147" width="410" height="127" filter="url(#nz)" opacity="0.600"/><rect x="33" y="147" width="410" height="127" filter="url(#nz2)" opacity="0.150"/></g><g clip-path="url(#cpF)"><rect x="33" y="100" width="410" height="110" filter="url(#nz)" opacity="0.350"/><rect x="33" y="100" width="410" height="110" filter="url(#nz2)" opacity="0.180"/></g><path d="M228 81.700H240L443 83.600V131L235 118.800L228 121.700z" fill="url(#bw)"/><path d="M228 81.700L443 83.600V91.500L228 89.800z" fill="url(#bwt)"/><path d="M33 82.900L240 81.700V90L158 89.400L122.700 95.200L33 92.200z" fill="url(#bm)"/><path d="M33 87.300L150 88.500L122.700 95.200L33 92.200z" fill="#afaba6"/><path d="M122.700 93L141 89.700L147 113.700L126.200 111.300z" fill="#bdb9b3"/><path d="M158.700 89.300H228.200V121.700L176 166.200z" fill="url(#lw)"/><path d="M140.100 89.700L158.700 89.300L176 166.200L170.200 172.700L162.600 170z" fill="#b84a4c"/><path d="M158.700 89.300L176 166.200L170.200 172.700L153 95z" fill="#c05052" opacity="0.600"/><rect x="228.200" y="98.500" width="2.300" height="23.200" fill="#2e5a90"/><path d="M231 99.500H290.500V120.300L236 117.600L231 119.800z" fill="#cbc7c0"/><path d="M230.500 99.300H291V101H230.500z" fill="#d0d0d3"/><path d="M236 116.600L290.500 119V121.200L236 118.700z" fill="#cfcecd"/><path d="M290.300 100V121" stroke="#cbcbcd" stroke-width="0.800"/><ellipse cx="261.400" cy="108.700" rx="2.500" ry="0.700" fill="#6a5a48"/><circle cx="261.200" cy="105.400" r="2.900" fill="url(#sph)"/><ellipse cx="364" cy="124" rx="3.500" ry="0.800" fill="#6a5a48"/><circle cx="363.700" cy="119.300" r="4" fill="url(#sph)"/><rect x="355.800" y="177.300" width="4.800" height="4.800" fill="#f01818"/><path d="M362.800 179.100h4.200" stroke="#f4f4f4" stroke-width="1.500" stroke-linecap="round"/><path d="M357.200 186.300h6.800" stroke="#cfcfcf" stroke-width="0.700" stroke-dasharray="2 0.800"/><path d="M48.500 260.500V247" stroke="#2020c8" stroke-width="1"/><path d="M48.500 260.500L34.200 258.600" stroke="#c81818" stroke-width="1"/><path d="M48.500 260.500L45.300 266.700" stroke="#20c020" stroke-width="1"/></svg>
<div class="lab" style="left:33.300px;top:46px;width:35.800px"><span style="left:0.800px;top:1.500px;font-weight:bold;font-size:8.400px;line-height:10px;letter-spacing:-0.78px;will-change:transform">camera</span></div>
<svg style="left:446.5px;top:46px;background:#646464" width="396.7" height="218.2" viewBox="446.5 46 396.7 218.2">
<path d="M446.5 48.93H843.2M446.5 52.99H843.2M446.5 61.11H843.2M446.5 69.24H843.2M446.5 73.30H843.2M446.5 77.36H843.2M446.5 85.49H843.2M446.5 89.55H843.2M446.5 93.61H843.2M446.5 101.74H843.2M446.5 109.86H843.2M446.5 113.93H843.2M446.5 117.99H843.2M446.5 126.11H843.2M446.5 134.24H843.2M446.5 138.30H843.2M446.5 142.36H843.2M446.5 150.49H843.2M446.5 154.55H843.2M446.5 158.61H843.2M446.5 166.74H843.2M446.5 174.86H843.2M446.5 178.93H843.2M446.5 182.99H843.2M446.5 191.11H843.2M446.5 199.24H843.2M446.5 203.30H843.2M446.5 207.36H843.2M446.5 215.49H843.2M446.5 219.55H843.2M446.5 223.61H843.2M446.5 231.74H843.2M446.5 239.86H843.2M446.5 243.93H843.2M446.5 247.99H843.2M446.5 256.11H843.2" stroke="#777777" stroke-width="0.9" fill="none" opacity="0.85"/><path d="M446.5 57.05H843.2M446.5 65.18H843.2M446.5 81.43H843.2M446.5 97.68H843.2M446.5 105.80H843.2M446.5 122.05H843.2M446.5 130.18H843.2M446.5 146.43H843.2M446.5 162.68H843.2M446.5 170.80H843.2M446.5 187.05H843.2M446.5 195.18H843.2M446.5 211.43H843.2M446.5 227.68H843.2M446.5 235.80H843.2M446.5 252.05H843.2M446.5 260.18H843.2" stroke="#696969" stroke-width="0.9" fill="none" opacity="0.8"/><path d="M454.10 46V264.2M458.16 46V264.2M462.23 46V264.2M470.35 46V264.2M478.48 46V264.2M482.54 46V264.2M486.60 46V264.2M494.73 46V264.2M502.85 46V264.2M506.91 46V264.2M510.98 46V264.2M519.10 46V264.2M523.16 46V264.2M527.23 46V264.2M535.35 46V264.2M543.48 46V264.2M547.54 46V264.2M551.60 46V264.2M559.73 46V264.2M567.85 46V264.2M571.91 46V264.2M575.98 46V264.2M584.10 46V264.2M588.16 46V264.2M592.23 46V264.2M600.35 46V264.2M608.48 46V264.2M612.54 46V264.2M616.60 46V264.2M624.73 46V264.2M632.85 46V264.2M636.91 46V264.2M640.98 46V264.2M649.10 46V264.2M653.16 46V264.2M657.23 46V264.2M665.35 46V264.2M673.48 46V264.2M677.54 46V264.2M681.60 46V264.2M689.73 46V264.2M697.85 46V264.2M701.91 46V264.2M705.98 46V264.2M714.10 46V264.2M718.16 46V264.2M722.23 46V264.2M730.35 46V264.2M738.48 46V264.2M742.54 46V264.2M746.60 46V264.2M754.73 46V264.2M762.85 46V264.2M766.91 46V264.2M770.98 46V264.2M779.10 46V264.2M783.16 46V264.2M787.23 46V264.2M795.35 46V264.2M803.48 46V264.2M807.54 46V264.2M811.60 46V264.2M819.73 46V264.2M827.85 46V264.2M831.91 46V264.2M835.98 46V264.2" stroke="#808080" stroke-width="0.95" fill="none" opacity="0.95"/><path d="M450.04 46V264.2M466.29 46V264.2M474.41 46V264.2M490.66 46V264.2M498.79 46V264.2M515.04 46V264.2M531.29 46V264.2M539.41 46V264.2M555.66 46V264.2M563.79 46V264.2M580.04 46V264.2M596.29 46V264.2M604.41 46V264.2M620.66 46V264.2M628.79 46V264.2M645.04 46V264.2M661.29 46V264.2M669.41 46V264.2M685.66 46V264.2M693.79 46V264.2M710.04 46V264.2M726.29 46V264.2M734.41 46V264.2M750.66 46V264.2M758.79 46V264.2M775.04 46V264.2M791.29 46V264.2M799.41 46V264.2M815.66 46V264.2M823.79 46V264.2M840.04 46V264.2" stroke="#6b6b6b" stroke-width="0.9" fill="none" opacity="0.8"/><path d="M446.5 73.30H843.2M681.60 46V264.2M811.60 46V264.2" stroke="#80583a" stroke-width="0.65" fill="none"/><path d="M551.6 46V264.2M446.5 203.3H843.2" stroke="#2f7878" stroke-width="0.9" fill="none"/>
<g transform="translate(0 0)"><path d="M482.7 172.700V73.500H768.600" stroke="#2f7fc0" stroke-width="1" fill="none"/><path d="M482.700 172.700H768.600" stroke="#2f7fc0" stroke-width="1" fill="none"/><path d="M764.700 77.300V300" stroke="#2a6ad0" stroke-width="0.800" fill="none"/><path d="M768.600 73.500V300" stroke="#2aa8c8" stroke-width="1" fill="none"/><path d="M486.600 300V77.300H764.700" stroke="#2ec4a0" stroke-width="0.850" fill="none"/><path d="M482.700 172.700V300" stroke="#2ec4a0" stroke-width="0.850" fill="none"/><path d="M493.200 173.200V223.500H723.900V173.200" stroke="#2cb896" stroke-width="0.750" fill="none"/><path d="M550.900 172.700V223.500M608.500 172.700V223.500" stroke="#2ec4a0" stroke-width="1.400" fill="none"/><path d="M665.500 171V224" stroke="#2ec4a0" stroke-width="1.600" fill="none"/><path d="M641 172.700V223.500" stroke="#2ea878" stroke-width="2" fill="none"/><path d="M550.900 216.500H723.500M575.500 216.500V223.500M690.500 216.500V223.500" stroke="#2ec4a0" stroke-width="1" fill="none"/><path d="M517.300 224.300H584M632.300 224.300H698.400" stroke="#2ec4a0" stroke-width="1.300" fill="none"/><path d="M551.400 205.500v6" stroke="#20e8e8" stroke-width="1"/><circle cx="551.400" cy="203.100" r="1.200" fill="#d8d8d8"/><path d="M665.500 205.600v5.800" stroke="#e020e0" stroke-width="1.200"/><circle cx="631.700" cy="175.300" r="1.100" fill="#d030c0"/><rect x="582.300" y="190" width="4" height="4" rx="0.800" fill="none" stroke="#20c820" stroke-width="0.900"/><circle cx="550.5" cy="152" r="1.3" fill="#2626d8" stroke="#10108a" stroke-width="0.4"/><circle cx="550.2" cy="151.7" r="0.5" fill="#7a7af0"/><circle cx="586.6" cy="152.4" r="1.3" fill="#2626d8" stroke="#10108a" stroke-width="0.4"/><circle cx="586.3000000000001" cy="152.1" r="0.5" fill="#7a7af0"/><circle cx="626.6" cy="149.4" r="1.3" fill="#2626d8" stroke="#10108a" stroke-width="0.4"/><circle cx="626.3000000000001" cy="149.1" r="0.5" fill="#7a7af0"/><circle cx="686" cy="155.3" r="1.3" fill="#2626d8" stroke="#10108a" stroke-width="0.4"/><circle cx="685.7" cy="155.0" r="0.5" fill="#7a7af0"/><circle cx="629.4" cy="186.8" r="1.3" fill="#2626d8" stroke="#10108a" stroke-width="0.4"/><circle cx="629.1" cy="186.5" r="0.5" fill="#7a7af0"/><circle cx="573.1" cy="197" r="1.3" fill="#2626d8" stroke="#10108a" stroke-width="0.4"/><circle cx="572.8000000000001" cy="196.7" r="0.5" fill="#7a7af0"/><circle cx="601.2" cy="196.5" r="1.3" fill="#2626d8" stroke="#10108a" stroke-width="0.4"/><circle cx="600.9000000000001" cy="196.2" r="0.5" fill="#7a7af0"/><circle cx="651.6" cy="200.1" r="1.3" fill="#2626d8" stroke="#10108a" stroke-width="0.4"/><circle cx="651.3000000000001" cy="199.79999999999998" r="0.5" fill="#7a7af0"/><circle cx="533.3" cy="198.4" r="1.3" fill="#2626d8" stroke="#10108a" stroke-width="0.4"/><circle cx="533.0" cy="198.1" r="0.5" fill="#7a7af0"/><circle cx="685.4" cy="213.3" r="1.3" fill="#2626d8" stroke="#10108a" stroke-width="0.4"/><circle cx="685.1" cy="213.0" r="0.5" fill="#7a7af0"/><path d="M616.6 172.3L621.5 189.1M616.6 172.3L643.7 153M616.6 172.3L681.8 155.1M621.5 189.1L643.7 153M621.5 189.1L686.4 172.3M643.7 153L649.4 151.7M649.4 151.7L681.8 155.1M649.4 151.7L686.4 172.3M681.8 155.1L686.4 172.3" stroke="#d02828" stroke-width="0.850" fill="none"/></g>
</svg>
<svg style="left:33px;top:278.3px;background:#646464" width="399.5" height="216.3" viewBox="33 278.3 399.5 216.3">
<path d="M33 279.99H432.5M33 284.05H432.5M33 288.11H432.5M33 296.24H432.5M33 304.36H432.5M33 308.43H432.5M33 312.49H432.5M33 320.61H432.5M33 328.74H432.5M33 332.80H432.5M33 336.86H432.5M33 344.99H432.5M33 349.05H432.5M33 353.11H432.5M33 361.24H432.5M33 369.36H432.5M33 373.43H432.5M33 377.49H432.5M33 385.61H432.5M33 393.74H432.5M33 397.80H432.5M33 401.86H432.5M33 409.99H432.5M33 414.05H432.5M33 418.11H432.5M33 426.24H432.5M33 434.36H432.5M33 438.43H432.5M33 442.49H432.5M33 450.61H432.5M33 458.74H432.5M33 462.80H432.5M33 466.86H432.5M33 474.99H432.5M33 479.05H432.5M33 483.11H432.5M33 491.24H432.5" stroke="#777777" stroke-width="0.9" fill="none" opacity="0.85"/><path d="M33 292.18H432.5M33 300.30H432.5M33 316.55H432.5M33 324.68H432.5M33 340.93H432.5M33 357.18H432.5M33 365.30H432.5M33 381.55H432.5M33 389.68H432.5M33 405.93H432.5M33 422.18H432.5M33 430.30H432.5M33 446.55H432.5M33 454.68H432.5M33 470.93H432.5M33 487.18H432.5" stroke="#696969" stroke-width="0.9" fill="none" opacity="0.8"/><path d="M39.55 278.3V494.6M47.68 278.3V494.6M51.74 278.3V494.6M55.80 278.3V494.6M63.93 278.3V494.6M72.05 278.3V494.6M76.11 278.3V494.6M80.18 278.3V494.6M88.30 278.3V494.6M92.36 278.3V494.6M96.43 278.3V494.6M104.55 278.3V494.6M112.68 278.3V494.6M116.74 278.3V494.6M120.80 278.3V494.6M128.93 278.3V494.6M137.05 278.3V494.6M141.11 278.3V494.6M145.18 278.3V494.6M153.30 278.3V494.6M157.36 278.3V494.6M161.43 278.3V494.6M169.55 278.3V494.6M177.68 278.3V494.6M181.74 278.3V494.6M185.80 278.3V494.6M193.93 278.3V494.6M202.05 278.3V494.6M206.11 278.3V494.6M210.18 278.3V494.6M218.30 278.3V494.6M222.36 278.3V494.6M226.43 278.3V494.6M234.55 278.3V494.6M242.68 278.3V494.6M246.74 278.3V494.6M250.80 278.3V494.6M258.93 278.3V494.6M267.05 278.3V494.6M271.11 278.3V494.6M275.18 278.3V494.6M283.30 278.3V494.6M287.36 278.3V494.6M291.43 278.3V494.6M299.55 278.3V494.6M307.68 278.3V494.6M311.74 278.3V494.6M315.80 278.3V494.6M323.93 278.3V494.6M332.05 278.3V494.6M336.11 278.3V494.6M340.18 278.3V494.6M348.30 278.3V494.6M352.36 278.3V494.6M356.43 278.3V494.6M364.55 278.3V494.6M372.68 278.3V494.6M376.74 278.3V494.6M380.80 278.3V494.6M388.93 278.3V494.6M397.05 278.3V494.6M401.11 278.3V494.6M405.18 278.3V494.6M413.30 278.3V494.6M417.36 278.3V494.6M421.43 278.3V494.6M429.55 278.3V494.6" stroke="#808080" stroke-width="0.95" fill="none" opacity="0.95"/><path d="M35.49 278.3V494.6M43.61 278.3V494.6M59.86 278.3V494.6M67.99 278.3V494.6M84.24 278.3V494.6M100.49 278.3V494.6M108.61 278.3V494.6M124.86 278.3V494.6M132.99 278.3V494.6M149.24 278.3V494.6M165.49 278.3V494.6M173.61 278.3V494.6M189.86 278.3V494.6M197.99 278.3V494.6M214.24 278.3V494.6M230.49 278.3V494.6M238.61 278.3V494.6M254.86 278.3V494.6M262.99 278.3V494.6M279.24 278.3V494.6M295.49 278.3V494.6M303.61 278.3V494.6M319.86 278.3V494.6M327.99 278.3V494.6M344.24 278.3V494.6M360.49 278.3V494.6M368.61 278.3V494.6M384.86 278.3V494.6M392.99 278.3V494.6M409.24 278.3V494.6M425.49 278.3V494.6" stroke="#6b6b6b" stroke-width="0.9" fill="none" opacity="0.8"/><path d="M55.80 278.3V494.6M315.80 278.3V494.6" stroke="#80583a" stroke-width="0.65" fill="none"/><path d="M185.8 278.3V494.6M33 397.8H432.5" stroke="#2f7878" stroke-width="0.9" fill="none"/>
<g transform="translate(0 0.45)"><path d="M55.500 401.500V320.400H315.700V401.500" stroke="#2ec4a0" stroke-width="1" fill="none" stroke-linejoin="round"/><path d="M59.700 397.800V324.300H311.500V397.800" stroke="#2ec4a0" stroke-width="0.900" fill="none"/><path d="M51.600 324.300V397.800H311.500M51.600 324.300H55.500" stroke="#2f6fc8" stroke-width="1" fill="none"/><path d="M55.500 401.700H315.700V397.800" stroke="#2f6fc8" stroke-width="1" fill="none"/><rect x="164.300" y="384" width="53.700" height="14" fill="none" stroke="#2ec4a0" stroke-width="0.900" rx="1"/><path d="M164.300 384l8.500 14M172.800 384l-8.500 14M172.800 384v14" stroke="#2ec4a0" stroke-width="0.700"/><path d="M216.700 384v14" stroke="#2ea878" stroke-width="1.200"/><rect x="177.500" y="386.900" width="5.600" height="11" rx="1" fill="none" stroke="#d030d0" stroke-width="0.900"/><circle cx="196.600" cy="390.800" r="2" fill="none" stroke="#20d020" stroke-width="0.900"/><circle cx="196.600" cy="395.500" r="2.500" fill="none" stroke="#20d020" stroke-width="0.900"/><path d="M187.500 389.700h6" stroke="#2222e0" stroke-width="1.400"/><circle cx="175.5" cy="389.7" r="1.100" fill="none" stroke="#2222e0" stroke-width="0.800"/><circle cx="201.7" cy="389.7" r="1.100" fill="none" stroke="#2222e0" stroke-width="0.800"/><circle cx="233.4" cy="389.4" r="1.100" fill="none" stroke="#2222e0" stroke-width="0.800"/><circle cx="236.5" cy="390.8" r="1.100" fill="none" stroke="#2222e0" stroke-width="0.800"/><circle cx="239.6" cy="390.9" r="1.100" fill="none" stroke="#2222e0" stroke-width="0.800"/><circle cx="213.300" cy="397" r="0.900" fill="#d030c0"/><circle cx="185.800" cy="353.400" r="1.100" fill="#f0e8b0"/><path d="M179 358.500l5.500 6.200M184.500 358.500l-5.500 6.200" stroke="#3a5ae0" stroke-width="0.700"/><path d="M184.200 358.500l5.300 6.200M189.500 358.500l-5.300 6.200" stroke="#2ec4a0" stroke-width="0.600"/><circle cx="185.500" cy="359.800" r="0.900" fill="#d030c0"/><circle cx="185.500" cy="367.500" r="0.900" fill="#d030c0"/><path d="M199.4 377.5L216.7 377.5M216.7 377.5L235.7 381.7M199.4 377.5L235.7 381.7M235.7 381.7L237.3 384.8M237.3 384.8L233.4 411M233.4 411L217.2 411M217.2 411L199.4 377.5M216.7 377.5L233.4 411M237.3 384.8L217.2 411" stroke="#d02828" stroke-width="0.850" fill="none"/></g>
</svg>
<svg style="left:446.5px;top:278.3px;background:#646464" width="396.7" height="216.3" viewBox="446.5 278.3 396.7 216.3">
<path d="M446.5 280.52H843.2M446.5 284.59H843.2M446.5 292.71H843.2M446.5 300.84H843.2M446.5 304.90H843.2M446.5 308.96H843.2M446.5 317.09H843.2M446.5 321.15H843.2M446.5 325.21H843.2M446.5 333.34H843.2M446.5 341.46H843.2M446.5 345.52H843.2M446.5 349.59H843.2M446.5 357.71H843.2M446.5 365.84H843.2M446.5 369.90H843.2M446.5 373.96H843.2M446.5 382.09H843.2M446.5 386.15H843.2M446.5 390.21H843.2M446.5 398.34H843.2M446.5 406.46H843.2M446.5 410.52H843.2M446.5 414.59H843.2M446.5 422.71H843.2M446.5 430.84H843.2M446.5 434.90H843.2M446.5 438.96H843.2M446.5 447.09H843.2M446.5 451.15H843.2M446.5 455.21H843.2M446.5 463.34H843.2M446.5 471.46H843.2M446.5 475.52H843.2M446.5 479.59H843.2M446.5 487.71H843.2" stroke="#777777" stroke-width="0.9" fill="none" opacity="0.85"/><path d="M446.5 288.65H843.2M446.5 296.77H843.2M446.5 313.02H843.2M446.5 329.27H843.2M446.5 337.40H843.2M446.5 353.65H843.2M446.5 361.77H843.2M446.5 378.02H843.2M446.5 394.27H843.2M446.5 402.40H843.2M446.5 418.65H843.2M446.5 426.77H843.2M446.5 443.02H843.2M446.5 459.27H843.2M446.5 467.40H843.2M446.5 483.65H843.2M446.5 491.77H843.2" stroke="#696969" stroke-width="0.9" fill="none" opacity="0.8"/><path d="M454.10 278.3V494.6M458.16 278.3V494.6M462.23 278.3V494.6M470.35 278.3V494.6M478.48 278.3V494.6M482.54 278.3V494.6M486.60 278.3V494.6M494.73 278.3V494.6M502.85 278.3V494.6M506.91 278.3V494.6M510.98 278.3V494.6M519.10 278.3V494.6M523.16 278.3V494.6M527.23 278.3V494.6M535.35 278.3V494.6M543.48 278.3V494.6M547.54 278.3V494.6M551.60 278.3V494.6M559.73 278.3V494.6M567.85 278.3V494.6M571.91 278.3V494.6M575.98 278.3V494.6M584.10 278.3V494.6M588.16 278.3V494.6M592.23 278.3V494.6M600.35 278.3V494.6M608.48 278.3V494.6M612.54 278.3V494.6M616.60 278.3V494.6M624.73 278.3V494.6M632.85 278.3V494.6M636.91 278.3V494.6M640.98 278.3V494.6M649.10 278.3V494.6M653.16 278.3V494.6M657.23 278.3V494.6M665.35 278.3V494.6M673.48 278.3V494.6M677.54 278.3V494.6M681.60 278.3V494.6M689.73 278.3V494.6M697.85 278.3V494.6M701.91 278.3V494.6M705.98 278.3V494.6M714.10 278.3V494.6M718.16 278.3V494.6M722.23 278.3V494.6M730.35 278.3V494.6M738.48 278.3V494.6M742.54 278.3V494.6M746.60 278.3V494.6M754.73 278.3V494.6M762.85 278.3V494.6M766.91 278.3V494.6M770.98 278.3V494.6M779.10 278.3V494.6M783.16 278.3V494.6M787.23 278.3V494.6M795.35 278.3V494.6M803.48 278.3V494.6M807.54 278.3V494.6M811.60 278.3V494.6M819.73 278.3V494.6M827.85 278.3V494.6M831.91 278.3V494.6M835.98 278.3V494.6" stroke="#808080" stroke-width="0.95" fill="none" opacity="0.95"/><path d="M450.04 278.3V494.6M466.29 278.3V494.6M474.41 278.3V494.6M490.66 278.3V494.6M498.79 278.3V494.6M515.04 278.3V494.6M531.29 278.3V494.6M539.41 278.3V494.6M555.66 278.3V494.6M563.79 278.3V494.6M580.04 278.3V494.6M596.29 278.3V494.6M604.41 278.3V494.6M620.66 278.3V494.6M628.79 278.3V494.6M645.04 278.3V494.6M661.29 278.3V494.6M669.41 278.3V494.6M685.66 278.3V494.6M693.79 278.3V494.6M710.04 278.3V494.6M726.29 278.3V494.6M734.41 278.3V494.6M750.66 278.3V494.6M758.79 278.3V494.6M775.04 278.3V494.6M791.29 278.3V494.6M799.41 278.3V494.6M815.66 278.3V494.6M823.79 278.3V494.6M840.04 278.3V494.6" stroke="#6b6b6b" stroke-width="0.9" fill="none" opacity="0.8"/><path d="M446.5 304.90H843.2M681.60 278.3V494.6M811.60 278.3V494.6" stroke="#80583a" stroke-width="0.65" fill="none"/><path d="M551.6 278.3V494.6M446.5 434.9H843.2" stroke="#2f7878" stroke-width="0.9" fill="none"/>
<g transform="translate(0 231.6)"><path d="M482.7 172.700V73.500H768.600" stroke="#2f7fc0" stroke-width="1" fill="none"/><path d="M482.700 172.700H768.600" stroke="#2f7fc0" stroke-width="1" fill="none"/><path d="M764.700 77.300V300" stroke="#2a6ad0" stroke-width="0.800" fill="none"/><path d="M768.600 73.500V300" stroke="#2aa8c8" stroke-width="1" fill="none"/><path d="M486.600 300V77.300H764.700" stroke="#2ec4a0" stroke-width="0.850" fill="none"/><path d="M482.700 172.700V300" stroke="#2ec4a0" stroke-width="0.850" fill="none"/><path d="M493.200 173.200V223.500H723.900V173.200" stroke="#2cb896" stroke-width="0.750" fill="none"/><path d="M550.900 172.700V223.500M608.500 172.700V223.500" stroke="#2ec4a0" stroke-width="1.400" fill="none"/><path d="M665.500 171V224" stroke="#2ec4a0" stroke-width="1.600" fill="none"/><path d="M641 172.700V223.500" stroke="#2ea878" stroke-width="2" fill="none"/><path d="M550.900 216.500H723.500M575.500 216.500V223.500M690.500 216.500V223.500" stroke="#2ec4a0" stroke-width="1" fill="none"/><path d="M517.300 224.300H584M632.300 224.300H698.400" stroke="#2ec4a0" stroke-width="1.300" fill="none"/><path d="M551.400 205.500v6" stroke="#20e8e8" stroke-width="1"/><circle cx="551.400" cy="203.100" r="1.200" fill="#d8d8d8"/><path d="M665.500 205.600v5.800" stroke="#e020e0" stroke-width="1.200"/><circle cx="631.700" cy="175.300" r="1.100" fill="#d030c0"/><rect x="582.300" y="190" width="4" height="4" rx="0.800" fill="none" stroke="#20c820" stroke-width="0.900"/><circle cx="550.5" cy="152" r="1.3" fill="#2626d8" stroke="#10108a" stroke-width="0.4"/><circle cx="550.2" cy="151.7" r="0.5" fill="#7a7af0"/><circle cx="586.6" cy="152.4" r="1.3" fill="#2626d8" stroke="#10108a" stroke-width="0.4"/><circle cx="586.3000000000001" cy="152.1" r="0.5" fill="#7a7af0"/><circle cx="626.6" cy="149.4" r="1.3" fill="#2626d8" stroke="#10108a" stroke-width="0.4"/><circle cx="626.3000000000001" cy="149.1" r="0.5" fill="#7a7af0"/><circle cx="686" cy="155.3" r="1.3" fill="#2626d8" stroke="#10108a" stroke-width="0.4"/><circle cx="685.7" cy="155.0" r="0.5" fill="#7a7af0"/><circle cx="629.4" cy="186.8" r="1.3" fill="#2626d8" stroke="#10108a" stroke-width="0.4"/><circle cx="629.1" cy="186.5" r="0.5" fill="#7a7af0"/><circle cx="573.1" cy="197" r="1.3" fill="#2626d8" stroke="#10108a" stroke-width="0.4"/><circle cx="572.8000000000001" cy="196.7" r="0.5" fill="#7a7af0"/><circle cx="601.2" cy="196.5" r="1.3" fill="#2626d8" stroke="#10108a" stroke-width="0.4"/><circle cx="600.9000000000001" cy="196.2" r="0.5" fill="#7a7af0"/><circle cx="651.6" cy="200.1" r="1.3" fill="#2626d8" stroke="#10108a" stroke-width="0.4"/><circle cx="651.3000000000001" cy="199.79999999999998" r="0.5" fill="#7a7af0"/><circle cx="533.3" cy="198.4" r="1.3" fill="#2626d8" stroke="#10108a" stroke-width="0.4"/><circle cx="533.0" cy="198.1" r="0.5" fill="#7a7af0"/><circle cx="685.4" cy="213.3" r="1.3" fill="#2626d8" stroke="#10108a" stroke-width="0.4"/><circle cx="685.1" cy="213.0" r="0.5" fill="#7a7af0"/><path d="M616.6 172.3L621.5 189.1M616.6 172.3L643.7 153M616.6 172.3L681.8 155.1M621.5 189.1L643.7 153M621.5 189.1L686.4 172.3M643.7 153L649.4 151.7M649.4 151.7L681.8 155.1M649.4 151.7L686.4 172.3M681.8 155.1L686.4 172.3" stroke="#d02828" stroke-width="0.850" fill="none"/></g>
</svg>
<div class="lab" style="left:446.500px;top:46px;width:44.400px"><span style="left:1.300px;top:1.700px;font-size:8px;line-height:10px;letter-spacing:-0.1px;-webkit-text-stroke:0.200px #fff;will-change:transform">top (x/y)</span></div>
<div class="lab" style="left:33px;top:278.300px;width:44.800px"><span style="left:1.300px;top:1.700px;font-size:8px;line-height:10px;letter-spacing:-0.1px;-webkit-text-stroke:0.200px #fff;will-change:transform">front (y/z)</span></div>
<div class="lab" style="left:446.500px;top:278.300px;width:44.400px"><span style="left:1.300px;top:1.700px;font-size:8px;line-height:10px;letter-spacing:-0.1px;-webkit-text-stroke:0.200px #fff;will-change:transform">top (x/y)</span></div>
<div class="scr" style="left:446.500px;top:265.400px;width:408px;height:9.400px"></div>
<div class="scr" style="left:844.400px;top:46px;width:10.400px;height:219.400px"></div>
<div class="scr" style="left:446.500px;top:496.200px;width:408px;height:10.800px"></div>
<div class="scr" style="left:844.400px;top:278.300px;width:10.400px;height:218px"></div>
<div class="scr" style="left:33px;top:496.200px;width:410px;height:10.800px"></div>
<div class="scr" style="left:433.800px;top:278.300px;width:9.400px;height:218px"></div>
<div class="thumb" style="left:653.800px;top:268.600px;width:35px;height:2.400px"></div>
<div class="thumb" style="left:653.800px;top:499.600px;width:35px;height:2.400px"></div>
<div class="thumb" style="left:237px;top:499.600px;width:35px;height:2.400px"></div>
<div class="thumb" style="left:847.800px;top:153.200px;width:2.800px;height:10px"></div>
<div class="thumb" style="left:847.800px;top:384.400px;width:2.800px;height:10.300px"></div>
<div class="thumb" style="left:437.300px;top:385.800px;width:2.500px;height:10.400px"></div>
<div style="left:445.800px;top:46px;width:0.800px;height:228.600px;background:#6a6a6a"></div>
<div style="left:446px;top:45.200px;width:408.500px;height:0.900px;background:#6e6e6e"></div>
<div style="left:32.600px;top:278.300px;width:0.700px;height:227.500px;background:#8c8c8c"></div>
<div style="left:445.800px;top:278.300px;width:0.800px;height:227.300px;background:#6a6a6a"></div>
<div id="right">
<span class="t" style="left:6.3px;top:6.90px;font-size:7.9px;letter-spacing:-0.309px;">Select</span>
<div class="btn" style="left:6.6px;top:17.6px;width:106.9px;height:10.6px;line-height:9.2px;font-size:7.4px;letter-spacing:-0.444px;background:#cce4f7;border-color:#2a7fd0;border-radius:2.500px">Groups</div>
<div class="btn" style="left:6.6px;top:31.9px;width:106.9px;height:10.6px;line-height:9.2px;font-size:7.4px;letter-spacing:-0.341px;">Objects</div>
<div class="btn" style="left:6.6px;top:46.2px;width:106.9px;height:10.6px;line-height:9.2px;font-size:7.9px;letter-spacing:-0.369px;">Solids</div>
<div class="hline" style="left:0;top:62.6px;width:120px"></div>
<span class="t" style="left:5.4px;top:65.60px;font-size:7.4px;letter-spacing:-0.513px;">Current texture:</span>
<div style="left:4.3px;top:76.1px;width:111.700px;height:14.400px;background:#fff;border:1px solid #c9c9c9;border-radius:1.500px"></div>
<span class="t" style="left:7.9px;top:78.80px;font-size:7.9px;letter-spacing:-0.457px;">in/pavement_roadsealed_plain</span>
<svg style="left:107.5px;top:81.5px" width="7" height="5" viewBox="0 0 7 5"><path d="M1 1l2.500 2.500L6 1" stroke="#555" stroke-width="0.700" fill="none"/></svg>
<div style="left:5.4px;top:92.8px;width:50.200px;height:50px;background:#222"><div style="left:0;top:0;width:50.200px;height:25.200px;background:#3e3a38"></div></div>
<span class="t" style="left:60.2px;top:94.20px;font-size:7.4px;letter-spacing:-0.580px;">4096x2048</span>
<div class="btn" style="left:61.5px;top:111.3px;width:52.0px;height:13.2px;line-height:11.8px;font-size:7.4px;letter-spacing:-0.427px;border-color:#3a8ad8;border-radius:2.500px">Browse...</div>
<div class="btn" style="left:61.8px;top:128.8px;width:51.4px;height:12.7px;line-height:11.3px;font-size:7.9px;letter-spacing:-0.437px;">Replace...</div>
<div class="hline" style="left:0;top:145.8px;width:120px"></div>
<span class="t" style="left:3.2px;top:148.00px;font-size:7.9px;letter-spacing:-0.543px;">VisGroups:</span>
<div style="left:3.5px;top:158.6px;width:25.800px;height:13.200px;background:#f9f9f9;border:1px solid #e6e6e6;border-bottom:none"></div>
<div style="left:29.6px;top:160px;width:22.800px;height:11.600px;background:#f3f3f3;border:1px solid #e6e6e6;border-bottom:none"></div>
<div style="left:52.6px;top:160px;width:27.600px;height:11.600px;background:#f3f3f3;border:1px solid #e6e6e6;border-bottom:none"></div>
<span class="t" style="left:7.2px;top:159.50px;font-size:7.9px;letter-spacing:-0.495px;">User</span>
<span class="t" style="left:31.8px;top:160.40px;font-size:7.4px;letter-spacing:-0.406px;">Auto</span>
<span class="t" style="left:56px;top:160.40px;font-size:7.9px;letter-spacing:-0.535px;">Cordon</span>
<div style="left:3.2px;top:171.6px;width:112.800px;height:97.800px;background:#fff;border:1px solid #a9adb8"></div>
<div class="btn" style="left:1.2px;top:273.2px;width:22.1px;height:9.4px;line-height:8.0px;font-size:7.9px;letter-spacing:-0.690px;">Show</div>
<div class="btn" style="left:26.7px;top:273.2px;width:22.1px;height:9.4px;line-height:8.0px;font-size:7.9px;letter-spacing:-0.428px;">Edit</div>
<div class="btn" style="left:51.9px;top:273.2px;width:22.4px;height:9.4px;line-height:8.0px;font-size:7.9px;letter-spacing:-0.614px;">Mark</div>
<div class="btn" style="left:78.1px;top:273.2px;width:8.8px;height:9.4px;line-height:8.0px;"></div>
<div class="btn" style="left:90.5px;top:273.2px;width:8.8px;height:9.4px;line-height:8.0px;"></div>
<svg style="left:78.1px;top:273.8px" width="22" height="9" viewBox="0 0 22 9"><path d="M4.400 7.300V2.500M2.300 4.300L4.400 2.100L6.500 4.300" stroke="#111" stroke-width="1.100" fill="none"/><path d="M16.800 1.900V6.500M14.700 4.700L16.800 6.900L18.900 4.700" stroke="#111" stroke-width="1.100" fill="none"/></svg>
<div class="hline" style="left:0;top:284px;width:120px;background:#dcdcdc"></div>
<span class="t" style="left:2.3px;top:286.20px;font-size:7.9px;letter-spacing:-0.655px;">Move</span>
<span class="t" style="left:2.3px;top:294.20px;font-size:7.9px;letter-spacing:-0.458px;">selected:</span>
<div class="btn" style="left:48px;top:289px;width:30.1px;height:11.6px;line-height:10.2px;font-size:7.9px;letter-spacing:-0.454px;background:#f6f6f6;border-color:#e8e8e8;color:#a0a0a0">toWorld</div>
<div class="btn" style="left:85.7px;top:289px;width:30.3px;height:11.6px;line-height:10.2px;font-size:7.4px;letter-spacing:-0.360px;background:#f6f6f6;border-color:#e8e8e8;color:#a0a0a0">toEntity</div>
<span class="t" style="left:3.2px;top:305.40px;font-size:7.9px;letter-spacing:-0.509px;">Categories:</span>
<div style="left:2.8px;top:316.3px;width:113.500px;height:10.200px;background:#f7f7f7;border:1px solid #ececec;border-radius:1.500px"></div>
<svg style="left:107.5px;top:319.3px" width="7" height="5" viewBox="0 0 7 5"><path d="M1 1l2.500 2.500L6 1" stroke="#bbb" stroke-width="0.700" fill="none"/></svg>
<span class="t" style="left:2.8px;top:329.50px;font-size:7.4px;letter-spacing:-0.405px;">Objects:</span>
<div style="left:2.5px;top:339.4px;width:113.300px;height:13.900px;background:#ececec;border:1px solid #d8d8d8;border-radius:1.500px"><div style="left:101px;top:0;width:10.300px;height:11.900px;background:#f8f8f8"></div></div>
<svg style="left:107px;top:344.3px" width="7" height="5" viewBox="0 0 7 5"><path d="M1 1l2.500 2.500L6 1" stroke="#aaa" stroke-width="0.700" fill="none"/></svg>
<div style="left:29.8px;top:356.4px;width:22.700px;height:12.900px;background:#fff;border-bottom:1px solid #9a9a9a"></div>
<span class="t" style="left:30.9px;top:356.50px;font-size:7.9px;letter-spacing:-0.394px;">0</span>
<div style="left:53.7px;top:356.6px;width:9px;height:6.200px;background:#f4f4f4;border:1px solid #d0d0d0"></div>
<div style="left:53.7px;top:363px;width:9px;height:6.200px;background:#f4f4f4;border:1px solid #d0d0d0"></div>
<svg style="left:53.7px;top:356.6px" width="9" height="13" viewBox="0 0 9 13"><path d="M2.600 4.100L4.500 2.200L6.400 4.100z" fill="#222"/><path d="M2.600 8.700L4.500 10.600L6.400 8.700z" fill="#222"/></svg>
<div class="btn" style="left:15.4px;top:372.9px;width:85.1px;height:12.3px;line-height:10.9px;font-size:7.4px;letter-spacing:-0.298px;">Create Prefab</div>
</div>
<div id="status">
<span class="t" style="left:1.2px;top:1px;font-size:7.55px;letter-spacing:-0.173px">For Help, press F1</span>
<span class="t" style="left:456.8px;top:1px;font-size:7.55px;letter-spacing:-0.053px">no selection.</span>
<span class="t" style="left:615.4px;top:1px;font-size:7.55px;letter-spacing:-0.275px">@1803, 669</span>
<span class="t" style="left:852px;top:1px;font-size:7.55px;letter-spacing:-0.108px">Zoom: 0.250</span>
<span class="t" style="left:906.5px;top:1px;font-size:7.55px;letter-spacing:-0.231px">Snap: On Grid: 2.0</span>
<div class="ssep" style="left:603px"></div>
<div class="ssep" style="left:716.5px"></div>
<div class="ssep" style="left:847.3px"></div>
<div class="ssep" style="left:902px"></div>
</div>
</body></html>
